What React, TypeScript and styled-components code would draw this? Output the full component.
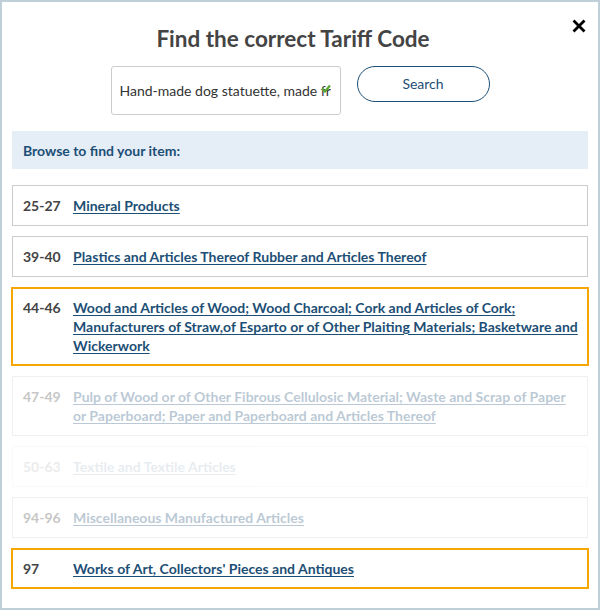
import styled, { createGlobalStyle } from "styled-components";

const Global = createGlobalStyle`
  html, body {
    margin: 0;
    padding: 0;
    background: #ffffff;
    font-family: Lato, "Open Sans", sans-serif;
  }
  * { box-sizing: border-box; }
`;

const Frame = styled.div`
  width: 600px;
  height: 610px;
  border: 2px solid #bfd0da;
  background: #fff;
  padding: 22px 10px 16px;
  position: relative;
`;

const Close = styled.button`
  position: absolute;
  top: 17px;
  right: 12px;
  width: 14px;
  height: 14px;
  padding: 0;
  border: none;
  background: none;
  cursor: pointer;
  display: flex;
`;

const Title = styled.h1`
  margin: 0;
  text-align: center;
  font-size: 22.5px;
  line-height: 28px;
  font-weight: 700;
  color: #444;
  padding: 1px 14px 0 0;
`;

const SearchRow = styled.div`
  display: flex;
  justify-content: center;
  align-items: flex-start;
  gap: 16px;
  margin-top: 13px;
`;

const InputWrap = styled.div`
  position: relative;
  width: 230px;
  height: 49px;
  border: 1px solid #cccccc;
  border-radius: 3px;
  display: flex;
  align-items: center;
  padding: 0 9px 0 8px;
  overflow: hidden;
`;

const InputText = styled.span`
  font-size: 14px;
  color: #333;
  white-space: nowrap;
  overflow: hidden;
`;

const Check = styled.svg`
  position: absolute;
  right: 9px;
  top: 17px;
`;

const SearchButton = styled.button`
  width: 133px;
  height: 36px;
  border: 1px solid #1d4f76;
  border-radius: 18px;
  background: #fff;
  color: #1d4f76;
  font-family: Lato, sans-serif;
  font-size: 14px;
  padding: 0 0 2px;
  cursor: pointer;
`;

const Browse = styled.div`
  margin-top: 16px;
  background: #e5edf6;
  padding: 10px 11px 9px;
  font-size: 14px;
  line-height: 19px;
  font-weight: 700;
  color: #1d4f76;
`;

const List = styled.div`
  display: flex;
  flex-direction: column;
  gap: 10px;
  margin-top: 16px;
`;

const Row = styled.div<{ $active?: boolean; $fade?: number }>`
  display: flex;
  border: ${(p) => (p.$active ? "2px solid #f7a600" : "1px solid #cccccc")};
  margin: ${(p) => (p.$active ? "0 -1px" : "0")};
  padding: ${(p) => (p.$active ? "9px 4px 9px 10px" : "10px 5px 10px 10px")};
  font-size: 14px;
  line-height: 19px;
  font-weight: 700;
  opacity: ${(p) => p.$fade ?? 1};
`;

const Code = styled.span`
  flex: 0 0 50px;
  color: #444;
`;

const Name = styled.a`
  color: #1d4f76;
  text-decoration: underline;
  text-underline-offset: 2px;
`;

const rows = [
  { code: "25-27", name: "Mineral Products" },
  { code: "39-40", name: "Plastics and Articles Thereof Rubber and Articles Thereof" },
  {
    code: "44-46",
    name: "Wood and Articles of Wood; Wood Charcoal; Cork and Articles of Cork; Manufacturers of Straw,of Esparto or of Other Plaiting Materials; Basketware and Wickerwork",
    active: true,
  },
  {
    code: "47-49",
    name: "Pulp of Wood or of Other Fibrous Cellulosic Material; Waste and Scrap of Paper or Paperboard; Paper and Paperboard and Articles Thereof",
    fade: 0.3,
  },
  { code: "50-63", name: "Textile and Textile Articles", fade: 0.1 },
  { code: "94-96", name: "Miscellaneous Manufactured Articles", fade: 0.3 },
  { code: "97", name: "Works of Art, Collectors' Pieces and Antiques", active: true },
];

export default function App() {
  return (
    <>
      <Global />
      <Frame>
        <Close aria-label="Close">
          <svg width="14" height="14" viewBox="0 0 14 14">
            <path d="M2.5 2.5 L11.5 11.5 M11.5 2.5 L2.5 11.5" stroke="#000" strokeWidth="2.8" strokeLinecap="square" />
          </svg>
        </Close>
        <Title>Find the correct Tariff Code</Title>
        <SearchRow>
          <InputWrap>
            <InputText>Hand-made dog statuette, made from</InputText>
            <Check width="10" height="9" viewBox="0 0 10 9">
              <path d="M1 4.5 L4 7.5 L9 1.5" stroke="#5aa832" strokeWidth="2.2" fill="none" />
            </Check>
          </InputWrap>
          <SearchButton>Search</SearchButton>
        </SearchRow>
        <Browse>Browse to find your item:</Browse>
        <List>
          {rows.map((r) => (
            <Row key={r.code} $active={r.active} $fade={r.fade}>
              <Code>{r.code}</Code>
              <Name href="#">{r.name}</Name>
            </Row>
          ))}
        </List>
      </Frame>
    </>
  );
}
